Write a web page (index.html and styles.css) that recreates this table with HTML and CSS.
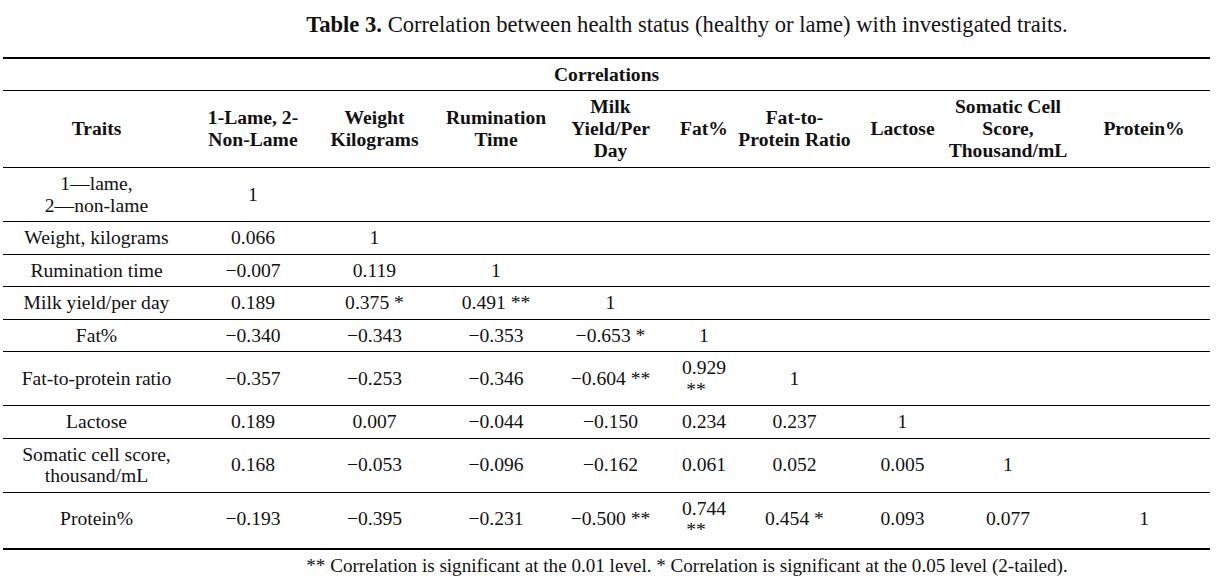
FILE: index.html
```html
<!DOCTYPE html>
<html lang="en">
<head>
<meta charset="utf-8">
<title>Table 3</title>
<link rel="stylesheet" href="styles.css">
</head>
<body>
<div class="page">
  <p class="caption"><b>Table 3.</b> Correlation between health status (healthy or lame) with investigated traits.</p>
  <table class="corr">
    <colgroup>
      <col class="c0"><col class="c1"><col class="c2"><col class="c3"><col class="c4">
      <col class="c5"><col class="c6"><col class="c7"><col class="c8"><col class="c9">
    </colgroup>
    <thead>
      <tr class="group"><th colspan="10">Correlations</th></tr>
      <tr class="heads">
        <th><div class="hd">Traits</div></th>
        <th><div class="hd">1-Lame, 2-<br>Non-Lame</div></th>
        <th><div class="hd">Weight<br>Kilograms</div></th>
        <th><div class="hd">Rumination<br>Time</div></th>
        <th><div class="hd">Milk<br>Yield/Per<br>Day</div></th>
        <th><div class="hd">Fat%</div></th>
        <th><div class="hd">Fat-to-<br>Protein Ratio</div></th>
        <th><div class="hd">Lactose</div></th>
        <th><div class="hd">Somatic Cell<br>Score,<br>Thousand/mL</div></th>
        <th class="last"><div class="hd">Protein%</div></th>
      </tr>
    </thead>
    <tbody>
      <tr><td>1—lame,<br>2—non-lame</td><td>1</td><td></td><td></td><td></td><td></td><td></td><td></td><td></td><td class="last"></td></tr>
      <tr><td>Weight, kilograms</td><td>0.066</td><td>1</td><td></td><td></td><td></td><td></td><td></td><td></td><td class="last"></td></tr>
      <tr><td>Rumination time</td><td>−0.007</td><td>0.119</td><td>1</td><td></td><td></td><td></td><td></td><td></td><td class="last"></td></tr>
      <tr><td>Milk yield/per day</td><td>0.189</td><td>0.375 *</td><td>0.491 **</td><td>1</td><td></td><td></td><td></td><td></td><td class="last"></td></tr>
      <tr><td>Fat%</td><td>−0.340</td><td>−0.343</td><td>−0.353</td><td>−0.653 *</td><td>1</td><td></td><td></td><td></td><td class="last"></td></tr>
      <tr><td>Fat-to-protein ratio</td><td>−0.357</td><td>−0.253</td><td>−0.346</td><td>−0.604 **</td><td>0.929<br><span class="wrapmark">**</span></td><td>1</td><td></td><td></td><td class="last"></td></tr>
      <tr><td>Lactose</td><td>0.189</td><td>0.007</td><td>−0.044</td><td>−0.150</td><td>0.234</td><td>0.237</td><td>1</td><td></td><td class="last"></td></tr>
      <tr><td>Somatic cell score,<br>thousand/mL</td><td>0.168</td><td>−0.053</td><td>−0.096</td><td>−0.162</td><td>0.061</td><td>0.052</td><td>0.005</td><td>1</td><td class="last"></td></tr>
      <tr><td>Protein%</td><td>−0.193</td><td>−0.395</td><td>−0.231</td><td>−0.500 **</td><td>0.744<br><span class="wrapmark">**</span></td><td>0.454 *</td><td>0.093</td><td>0.077</td><td class="last">1</td></tr>
    </tbody>
  </table>
  <p class="footnote">** Correlation is significant at the 0.01 level. * Correlation is significant at the 0.05 level (2-tailed).</p>
</div>
</body>
</html>
```
FILE: styles.css
```css
html, body {
  margin: 0;
  padding: 0;
  background: #ffffff;
}
body {
  font-family: "Liberation Serif", "Times New Roman", serif;
  color: #111111;
}
.page {
  width: 1207px;
  padding: 12px 0 0 3px;
}
.caption {
  margin: 0 0 19px 0;
  padding-left: 161px;
  text-align: center;
  font-size: 22.6px;
  line-height: 26px;
}
.corr {
  width: 1207px;
  table-layout: fixed;
  border-collapse: collapse;
  border-top: 2px solid #000;
  border-bottom: 2px solid #000;
  font-size: 19.6px;
  line-height: 21.5px;
}
col.c0 { width: 187px; }
col.c1 { width: 126px; }
col.c2 { width: 117px; }
col.c3 { width: 126px; }
col.c4 { width: 103px; }
col.c5 { width: 84px; }
col.c6 { width: 97px; }
col.c7 { width: 119px; }
col.c8 { width: 92px; }
col.c9 { width: 156px; }
.corr th, .corr td {
  padding: 5px 4px;
  text-align: center;
  vertical-align: middle;
  white-space: nowrap;
  border-bottom: 1px solid #000;
}
.corr tbody tr:last-child td {
  border-bottom: none;
  padding-bottom: 7px;
}
.corr th {
  font-weight: bold;
}
.corr .group th {
  padding: 5px 4px;
  height: 20px;
  line-height: 21px;
}
.corr .heads th {
  line-height: 22px;
}
.hd {
  margin: 0 -18px;
}
.corr .last {
  padding-left: 28px;
}
.wrapmark {
  display: inline-block;
  margin-right: 16px;
}
.footnote {
  margin: 5px 0 0 0;
  padding-left: 161px;
  text-align: center;
  font-size: 19.1px;
  line-height: 22px;
}
```
